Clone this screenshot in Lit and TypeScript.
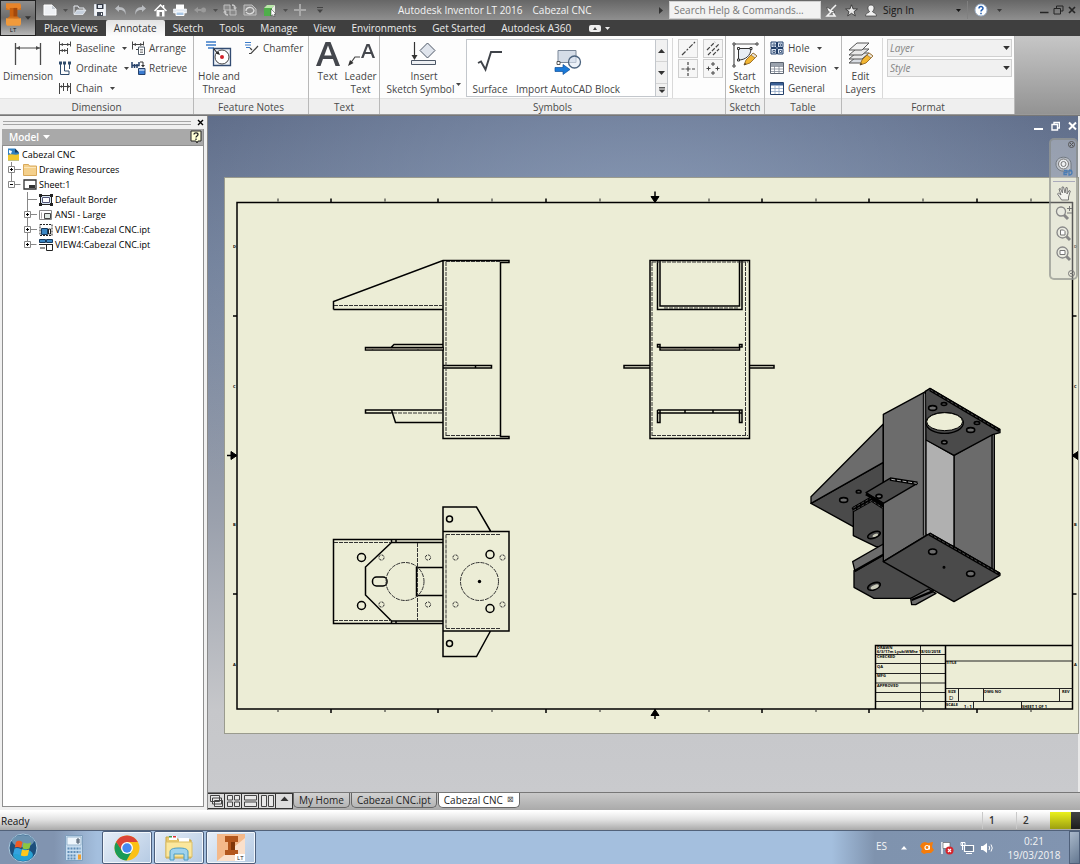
import { LitElement, html, svg, css, nothing } from "lit";
import { customElement, property } from "lit/decorators.js";

const ic = (w: number, h: number, body: unknown) =>
  html`<svg width=${w} height=${h} viewBox="0 0 ${w} ${h}" fill="none" aria-hidden="true">${body}</svg>`;

const caret = html`<svg class="caret" width="5" height="3" viewBox="0 0 5 3" aria-hidden="true"><path d="M0 0h5L2.5 3z" fill="currentColor" /></svg>`;

const pencil = svg`<g transform="translate(13 12)"><path d="M0 12 2 7 9 0l4 3-7 7z" fill="#f2b632" stroke="#8a5a12" stroke-width=".8"/><path d="M9 0l4 3-2 2-4-3z" fill="#e8e4da" stroke="#8a5a12" stroke-width=".6"/><path d="M0 12l1-2 1.400 1.200z" fill="#333"/></g>`;

const icons = {
  newDoc: ic(14, 12, svg`<path d="M1 1h8l4 4v6H1z" fill="#eef0f3" stroke="#fff"/><path d="M9 1v4h4" fill="#c4c9d0"/>`),
  open: ic(14, 12, svg`<path d="M1 10V2h4l1 2h5v2" stroke="#e6eaf0"/><path d="M1 10.500 4 6h9l-3 4.500z" fill="#c5cfdc" stroke="#f4f6fa" stroke-width=".7"/>`),
  save: ic(12, 12, svg`<path d="M.5.5h11v11H.5z" fill="#f2f4f7" stroke="#dfe5ee"/><path d="M2.500 0h7v5h-7z" fill="#333a46"/><path d="M4 1h4v3H4z" fill="#dfe5ee"/><path d="M3 8h6v4H3z" fill="#454c58"/><path d="M7 9h1v2H7z" fill="#fff"/>`),
  undo: ic(13, 12, svg`<path d="M5 1 1 4.500 5 8V6c3.500-.3 6 1 6.500 5C12.500 6 10 3 5 3z" fill="#b9bcc0"/>`),
  redo: ic(13, 12, svg`<path d="M8 1l4 3.500L8 8V6C4.500 5.700 2 7 1.500 11 .5 6 3 3 8 3z" fill="#b9bcc0"/>`),
  home: ic(13, 13, svg`<path d="M2.500 6v6.500h8V6" fill="#fff"/><path d="M.5 7 6.500 1l6 6" stroke="#fff" stroke-width="1.500"/><path d="M9.500 1v3" stroke="#fff" stroke-width="1.500"/><path d="M5.500 8h2.500v4.500H5.500z" fill="#777"/>`),
  print: ic(14, 12, svg`<path d="M3 .5h8V5H3z" fill="#fff"/><path d="M.5 5h13v4H.5z" fill="#e4eaf2" stroke="#fff" stroke-width=".6"/><path d="M3 8h8v3.500H3z" fill="#a9c6e4" stroke="#fff"/>`),
  back: ic(14, 10, svg`<path d="M5 2 1 5l4 3V6h3V4H5z" fill="#9a9a9a"/><circle cx="10.500" cy="5" r="2.500" fill="#9a9a9a"/>`),
  refresh: ic(14, 12, svg`<path d="M1 1h6v5H1zM7 6h6v5H7z" fill="#8a8a8a" stroke="#c0c0c0"/><path d="M9 1c3 0 3 2 3 3M5 11C2 11 2 9 2 8" stroke="#c8c8c8" stroke-width="1.500"/><path d="M10 3.500h4L12 6zM0 8.500h4L2 6z" fill="#c8c8c8"/>`),
  refreshAll: ic(14, 12, svg`<path d="M1 1h8l4 4v6H1z" fill="#8a8a8a" stroke="#c0c0c0"/><path d="M3 7c0-4 6-5 8-1M11 6c0 4-6 5-8 2" stroke="#dcdcdc" stroke-width="1.300"/>`),
  cube: ic(14, 13, svg`<path d="M1 4 4 1h8l-3 3z" fill="#b9e6a8"/><path d="M1 4h8v8H1z" fill="#4fae4a"/><path d="M9 4l3-3v8l-3 3z" fill="#e9efe6"/><path d="M8 5l5 5-2 .3 1 2-1.300.5-1-2L8 12z" fill="#fff" stroke="#333" stroke-width=".5"/>`),
  plus: ic(12, 12, svg`<path d="M6 0v12M0 6h12" stroke="#a8a8a8" stroke-width="2"/>`),
  more: ic(8, 6, svg`<path d="M1 .5h6" stroke="#444"/><path d="M1 2.500h6L4 6z" fill="#444"/>`),
  dish: ic(13, 13, svg`<path d="M2 3c0 5 4 7 8 5z" fill="#f5f5f5" stroke="#333" stroke-width=".6"/><path d="M6 6l5-5M6 8l-4 4h8L8 9" stroke="#f5f5f5" stroke-width="1.500"/>`),
  star: ic(13, 13, svg`<path d="M6.500.8 8.100 5h4.300L9 7.600l1.300 4.300-3.800-2.600-3.800 2.600L4 7.600.6 5h4.300z" fill="#e9e9e9" stroke="#2c2c2c" stroke-width=".8"/>`),
  user: ic(12, 13, svg`<path d="M6 1c4 0 3.500 5 1.500 6.500 0 1.500 4 1 4 4.500H.5c0-3.500 4-3 4-4.500C2.500 6 2 1 6 1z" fill="#f1f1f1" stroke="#3a3a3a" stroke-width=".7"/>`),
  help: ic(14, 14, svg`<circle cx="7" cy="7" r="6" fill="#fff" stroke="#9fb3cc"/><path d="M5 5.500C5 3 9 3 9 5.300 9 7 7 6.800 7 8.500M7 9.800v1.400" stroke="#1e5bb0" stroke-width="1.500"/>`),
  min: ic(10, 10, svg`<path d="M1 7.500h8.500" stroke="#252525" stroke-width="1.500"/>`),
  restore: ic(11, 10, svg`<path d="M3.500 3V1h6.500v5H8" stroke="#252525"/><path d="M1 3.500h6.500V9H1z" stroke="#252525"/>`),
  close: ic(8, 10, svg`<path d="M1 2l6 6M7 2 1 8" stroke="#252525" stroke-width="1.700"/>`),

  dimension: ic(28, 28, svg`<path d="M1.500 3v22M26.500 3v22" stroke="#4b4b4b" stroke-width="1.300"/><path d="M2 8h24" stroke="#4b4b4b"/><path d="M2 8l4-2v4zM26 8l-4-2v4z" fill="#4b4b4b"/>`),
  baseline: ic(14, 14, svg`<path d="M1.500.5v13M12.500.5v5M9.500 7v6" stroke="#444"/><path d="M2 3.500h10M2 9.500h7" stroke="#444"/><path d="M2 3.500 5 2v3zM12 3.500 9 2v3zM2 9.500 5 8v3zM9 9.500 6 8v3z" fill="#444"/>`),
  ordinate: ic(14, 14, svg`<path d="M2.500 3v10.500H11V10H6.500V3M11.500 3v5" stroke="#2e4a6b"/><path d="M1 .5h3v3H1zM5 .5h3v3H5zM10 .5h3v3h-3z" fill="#2e4a6b"/>`),
  chain: ic(14, 13, svg`<path d="M1.500 1v11M5.500 1v8M9.500 1v8M12.500 1v11M2 4.500h10" stroke="#444"/><path d="M2 4.500 4 3v3zM12 4.500 10 3v3z" fill="#444"/>`),
  arrange: ic(15, 14, svg`<path d="M1.500.5v8M12.500.5v4M2 3.500h10M5 8.500h2" stroke="#444"/><path d="M2 3.500 5 2v3zM12 3.500 9 2v3z" fill="#444"/><path d="M7.500 6h6v7.500h-6z" fill="#fff" stroke="#4f5a66"/><path d="M9 8.500h3M9 10h3M9 11.500h3" stroke="#777" stroke-width=".8"/>`),
  retrieve: ic(15, 14, svg`<path d="M1 1v6M3.500 3v4M6 3v4M1 4.500h7V1" stroke="#24406a" stroke-width="1.500"/><path d="M9 1h3v4" stroke="#333"/><path d="M10 4h4l-2 2.500z" fill="#333"/><path d="M7.500 7.500h6.500v6H7.500z" fill="#3b7bd0" stroke="#24406a"/><path d="M8 9h5.500" stroke="#fff"/>`),
  hole: ic(28, 28, svg`<path d="M1 2h10M1 5h10M3 8h6" stroke="#3b7bc8" stroke-width="1.500"/><path d="M8.500 8.500h17v17h-17z" fill="#eef2f8" stroke="#334c72" stroke-width="1.300"/><circle cx="17" cy="17" r="7" fill="#fff" stroke="#444"/><circle cx="17" cy="17" r="2" fill="#d3222a"/><path d="M9 9l4 5" stroke="#222" stroke-width="1.200"/><path d="M15 15l-4-1.500 2.500-2z" fill="#222"/>`),
  chamfer: ic(14, 14, svg`<path d="M0 1.500h6M0 4h6M1 6.500h4" stroke="#3b7bc8"/><path d="M4 12.500h2L13 5M7 9 5 7" stroke="#444" stroke-width="1.200"/>`),
  bigA: ic(26, 28, svg`<path d="M1 26 10.500 2h5L25 26h-4.500l-2.500-7H8l-2.500 7zM9.300 15.500h7.400L13 5.500z" fill="#44474d" fill-rule="evenodd"/>`),
  leader: ic(28, 26, svg`<path d="M14 17 19.500 3h3L28 17h-2.500L24 13h-6l-1.500 4zM18.700 11h4.600L21 5z" fill="#44474d" fill-rule="evenodd"/><path d="M3 23l5-7h5" stroke="#444" stroke-width="1.200"/><path d="M1 25l2-6 3.500 3z" fill="#333"/>`),
  insert: ic(28, 26, svg`<path d="M4.500 1v16" stroke="#333" stroke-width="1.200"/><path d="M1.500 14h6l-3 5z" fill="#333"/><path d="M17.500 2 25 9.500 17.500 17 10 9.500z" fill="#dfe4ec" stroke="#4d5766"/><path d="M1.500 19.500h24v4h-24z" fill="#eef0f3" stroke="#4d5766"/>`),
  surface: ic(28, 24, svg`<path d="M2 13l3-1.500 4.500 8L15 2h11" stroke="#3f4349" stroke-width="1.900"/>`),
  block: ic(28, 26, svg`<path d="M4 1.500h18v12H4z" fill="#d5dde8" stroke="#7a8798"/><circle cx="20.500" cy="13" r="6" stroke="#4c647f" fill="#dfe8f3" fill-opacity=".6" stroke-width="1.300"/><path d="M3 12.500h3v3H3z" fill="#fff" stroke="#333" stroke-width=".8"/><path d="M1 18.500h8v-3l7 5-7 5v-3H1z" fill="#1b7ad8" stroke="#0e4f9a" stroke-width=".7"/>`),
  cl1: ic(16, 15, svg`<path d="M2 14 15 1" stroke="#444" stroke-width="1.200" stroke-dasharray="5 1.500 2 1.500"/>`),
  cl2: ic(16, 15, svg`<path d="M2 9l8-8M3 14 14 3M8 14l6-6" stroke="#444" stroke-width="1.200" stroke-dasharray="4 1.500"/>`),
  cl3: ic(16, 15, svg`<path d="M8 1v3M8 5.500v5M8 12v3M1.500 8h3M5.500 8h5M12 8h3" stroke="#444" stroke-width="1.200"/>`),
  cl4: ic(16, 15, svg`<path d="M8 1v4M6 3h4M8 10v4M6 12h4M3.500 5.500v4M1.500 7.500h4M12.500 5.500v4M10.500 7.500h4" stroke="#444"/>`),
  sketch: ic(28, 27, svg`<path d="M3 3h23M3 3v22" stroke="#555" stroke-width="1.200"/><path d="M2 2h2v2H2zM25 2h2v2h-2zM2 24h2v2H2z" fill="#fff" stroke="#444"/><path d="M7.500 7.500H20C20 15 14 19 7.500 19z" fill="#e8edf3" stroke="#333"/><path d="M6.500 6.500h2v2h-2zM19 6.500h2v2h-2zM6.500 18h2v2h-2z" fill="#fff" stroke="#333"/>${pencil}`),
  holeTable: ic(14, 14, svg`<path d="M1 1h5.500v5.500H1zM7.500 1H13v5.500H7.500zM1 7.500h5.500V13H1zM7.500 7.500H13V13H7.500z" fill="#dbe6f4" stroke="#24406a"/><path d="M3 3h2v2H3zM9.500 3h2v2h-2zM3 9.500h2v2H3zM9.500 9.500h2v2h-2z" fill="#fff" stroke="#24406a" stroke-width=".8"/>`),
  revTable: ic(14, 12, svg`<path d="M.5.5h13v11H.5z" fill="#fff" stroke="#5c6470"/><path d="M1 1h12v3H1z" fill="#9aa2ad"/><path d="M1 4.500h12M1 7h12M1 9.500h12M4.500 4v7M9 4v7" stroke="#808894" stroke-width=".8"/>`),
  genTable: ic(14, 13, svg`<path d="M.5.5h13v12H.5z" fill="#fff" stroke="#24406a"/><path d="M1 1h12v2.500H1z" fill="#3a5f95"/><path d="M1 6.500h12M1 9.500h12M5 4v8M9 4v8" stroke="#8fa6c4" stroke-width=".8"/>`),
  layers: ic(28, 27, svg`<path d="M2 22l7-6h13l-7 6z" fill="#d9dde3" stroke="#555"/><path d="M2 18l7-6h13l-7 6z" fill="#e8e8e8" stroke="#555"/><path d="M2 14 9 8h13l-7 6z" fill="#e8e8e8" stroke="#555"/><path d="M2 9 10 2h12l-7 7z" fill="#f2f2f2" stroke="#555"/>${pencil}`),

  wcascade: ic(13, 12, svg`<path d="M.5.5h9v6h-9zM2.500 3h9v6h-9zM4.500 5.500h8v6h-8z" fill="#e8e8e8" stroke="#444"/>`),
  wgrid: ic(13, 12, svg`<path d="M.5.5h5v4.500h-5zM7.500.5h5v4.500h-5zM.5 7h5v4.500h-5zM7.500 7h5v4.500h-5z" fill="#e8e8e8" stroke="#444"/>`),
  whoriz: ic(13, 12, svg`<path d="M.5.5h12v4.500H.5zM.5 7h12v4.500H.5z" fill="#e8e8e8" stroke="#444"/>`),
  wvert: ic(13, 12, svg`<path d="M.5.5h5v11h-5zM7.500.5h5v11h-5z" fill="#e8e8e8" stroke="#444"/>`),
  wup: ic(13, 12, svg`<path d="M2.500 6h8l-4-4.500z" fill="#333"/>`),
};

const inventorMark = (w: number, h: number) => html`<svg width=${w} height=${h} viewBox="0 0 16 24" aria-hidden="true">
  <path d="M0 0h15l1 2v5H0z" fill="#e8842a" /><path d="M4 5h8v13H4z" fill="#c8600f" /><path d="M8 5h4v13H8z" fill="#a3480c" />
  <path d="M0 16h16v6l-1 2H1l-1-2z" fill="#f09a3c" /><path d="M0 5l4 2h8l4-2v2H0z" fill="#d0701c" /><path d="M1 16l3-2h8l3 2z" fill="#d0701c" />
</svg>`;

/* One line of the model tree: indent level, expander sign, icon and name. */
interface Node { level: number; sign: string; icon: unknown; name: string }
const tree: Node[] = [
  { level: 0, sign: "", name: "Cabezal CNC", icon: ic(13, 13, svg`<path d="M1 .5h7l4 4v8H1z" fill="#2f7fc0"/><path d="M1 7c4-2 7 1 11-1v6.500H1z" fill="#f0c62e"/><path d="M2 2l3 1-1 3-2-1z" fill="#fff"/><path d="M8 .5v4h4z" fill="#183a5c"/>`) },
  { level: 1, sign: "+", name: "Drawing Resources", icon: ic(14, 12, svg`<path d="M.5.5h5l1 1.500h7v9.500H.5z" fill="#f4d08c" stroke="#d9a95a"/><path d="M1 3.500h12" stroke="#fbe6bb"/>`) },
  { level: 1, sign: "-", name: "Sheet:1", icon: ic(14, 11, svg`<path d="M1 1h12v9H1z" fill="#fff" stroke="#333" stroke-width="1.300"/><path d="M6 6h6v3H6z" fill="#333"/>`) },
  { level: 2, sign: "", name: "Default Border", icon: ic(14, 12, svg`<path d="M1.500 1.500h11v9h-11z" fill="#dbe9f6" stroke="#222"/><path d="M3.500 3.500h7v5h-7z" fill="#fff" stroke="#557"/><path d="M0 0h3v3H0zM11 0h3v3h-3zM0 9h3v3H0zM11 9h3v3h-3z" fill="#222"/>`) },
  { level: 2, sign: "+", name: "ANSI - Large", icon: ic(14, 12, svg`<path d="M.5 1.500h12v9H.5z" fill="#fff" stroke="#888"/><path d="M2.500 3.500v6" stroke="#aaa"/><path d="M5.500 4.500h6v5h-6z" fill="#dfe9e4" stroke="#444"/>`) },
  { level: 2, sign: "+", name: "VIEW1:Cabezal CNC.ipt", icon: ic(14, 12, svg`<path d="M1 .5h12v11H1z" stroke="#222" stroke-dasharray="2 1"/><path d="M2.500 4.500h6v6h-6z" fill="#3c87c4" stroke="#16395c"/><path d="M9.500 5h2v5h-2z" stroke="#222"/>`) },
  { level: 2, sign: "+", name: "VIEW4:Cabezal CNC.ipt", icon: ic(14, 12, svg`<path d="M0 0h14v12H0z" fill="#fff"/><path d="M.5.500h6v3h-6zM7.500.5h6v3h-6z" fill="#3c87c4" stroke="#16395c"/><path d="M0 5.500h14M7.500 6v5.500h6V6M1 9h5" stroke="#222"/>`) },
];

/* Zone boundaries are heavy ticks; zone names sit half way between them. */
const ticksX = [331, 438, 546, 762, 869, 977];
const ticksY = [316, 594];
const midX = [278, 385, 492, 600, 709, 816, 923, 1031];

const holes = (pts: number[][], r: number) => pts.map(([x, y]) => svg`<circle cx=${x} cy=${y} r=${r} />`);

const sideView = svg`
  <g class="thick">
    <path d="M333.500 309.500V301.500L443 260.500H509V262.500H500.500V436.500H509V438.500H443V260M333.500 309.500H443" />
    <path d="M365.500 347.500H443V350H365.500zM391 347.500L394 344.500H443M372.500 347v3M391.500 347v3M418 347v3" />
    <path d="M443 365.500H491.500V368H443M475.500 365v3" />
    <path d="M443 410H365.500V413H391.500M391.500 410L395.500 422.500H443" />
  </g>
  <path class="dash" d="M334 305.500H443M446 262V436M446 261.500H500M446 435.500H500M393 413H443" />
  <path class="fill" d="M366 348h77v1.500h-77z" />`;

const frontView = svg`
  <g class="thick">
    <path d="M650 260.500H749.500V438.500H650z" />
    <path d="M657.500 260V309.500H742V260M660 260V306H739.500V260" />
    <path d="M660 347.500H739.500V350H660zM657.500 344.500H660V347H657.500zM739.500 344.500H742V347H739.500zM685 347v3M713 347v3" />
    <path d="M650 365.500H624V368H650M749.500 365.500H774V368H749.500" />
    <path d="M657.500 410H742V422.500H739.500V410M657.500 410V422.500H660V410M658 413H742M685 410v3M713 410v3" />
  </g>
  <path class="dash" d="M652 262H748M652 262V436M745.500 262V436M652 435.500H748M664 308H738" />
  <path class="fill" d="M661 348h78v1.500h-78z" />`;

const topView = svg`
  <g class="thick">
    <path d="M443 539.500H333.500V623.500H443M443 542.500H391.500L365.500 567V595L391.500 621H443M391.500 540v3M396 540v3M391.500 621v3M396 621v3" />
    <path d="M443 567.500H416.500V595.500H443" />
    <path d="M443 531.500H509V631H443zM443 531.500V507H476.500L490.500 531M443 631V656.500H476.500L490.500 631" />
    <rect x="372.500" y="577" width="14.500" height="9" rx="4" />
    ${holes([[361.5, 557.5], [361.5, 605.5], [490, 554.5], [490, 608.5]], 4)}
    ${holes([[449.5, 519], [449.5, 643.5]], 3)}
  </g>
  <path class="dash" d="M334 542.500H391M334 620.500H391M417.500 543V621M446 534.500H501M446 628.500H501M446 534.500V628" />
  <g class="dash small">
    ${holes([[381.5, 557.5], [428, 557.5], [455.5, 557.5], [502.5, 557.5], [381.5, 604.5], [428, 604.5], [455.5, 604.5], [502.5, 604.5]], 2.6)}
  </g>
  <g class="dash big">${holes([[405, 581.5], [479.5, 581.5]], 19)}</g>
  <circle cx="479.500" cy="581.500" r="1.700" fill="#000" />`;

const isoView = svg`
  <g transform="translate(800 380) scale(.3333)" stroke="#000" stroke-width="4" stroke-linejoin="round">
    <path d="M33 370 250 247V500L222 478 160 440z" fill="#4a4a4a" />
    <path d="M33 350 250 132V247L33 370z" fill="#6c6c6c" />
    <path d="M160 382 212 352 250 380V500H228L160 467z" fill="#4a4a4a" />
    <path d="M158 390 215 358 250 380" stroke-width="14" fill="none" /><path d="M160 384 215 353 250 374M160 392 215 362 250 384" stroke="#6c6c6c" stroke-width="2" fill="none" stroke-dasharray="9 5" />
    <path d="M162 572 250 522 408 630 333 655H222L162 622z" fill="#4a4a4a" />
    <path d="M158 545 250 492V525L165 574z" fill="#6c6c6c" />
    <path d="M332 655 385 627 408 640 347 674H335z" fill="#6c6c6c" />
    <path d="M165 572 250 524M335 660 398 634" stroke-width="7" />
    <path d="M250 103 378 34V467L250 545z" fill="#6c6c6c" />
    <path d="M575 160H583V575H575z" fill="#8a8a8a" />
    <path d="M462 226 576 162V568L462 500z" fill="#6b6b6b" />
    <path d="M378 178 462 226V500L378 462z" fill="#b0b0b0" />
    <path d="M376 34 390 25 600 148V158L578 164 462 226 378 180z" fill="#4a4a4a" />
    <path d="M390 29 598 152" stroke-width="10" /><path d="M392 30 596 150" stroke="#6c6c6c" stroke-width="2" stroke-dasharray="9 5" />
    <path d="M370 40V467" stroke-width="3" /><path d="M374 42V465" stroke="#8a8a8a" stroke-width="3" />
    <ellipse cx="434" cy="129" rx="56" ry="31" fill="#4a4a4a" />
    <ellipse cx="434" cy="125" rx="54" ry="27" fill="#ecedd6" stroke-width="3" />
    <path d="M250 545 390 460 600 580V586L462 665z" fill="#4a4a4a" />
    <path d="M388 462 598 582" stroke-width="10" /><path d="M390 463 596 581" stroke="#6c6c6c" stroke-width="2" stroke-dasharray="9 5" />
    <path d="M198 338 270 295 352 310 250 370z" fill="#4a4a4a" />
    <path d="M270 297 352 310" stroke-width="11" /><path d="M274 298 350 310" stroke="#b0b0b0" stroke-width="3" stroke-dasharray="12 5" />
    <path d="M198 342 250 372" stroke-width="9" />
    <g fill="#6c6c6c" stroke-width="5">
      <ellipse cx="398" cy="84" rx="12" ry="7" /><ellipse cx="432" cy="72" rx="8" ry="4" /><ellipse cx="531" cy="129" rx="8" ry="4" />
      <ellipse cx="512" cy="150" rx="12" ry="7" /><ellipse cx="433" cy="187" rx="8" ry="5" />
      <ellipse cx="131" cy="360" rx="12" ry="7" /><ellipse cx="176" cy="335" rx="7" ry="4" /><ellipse cx="237" cy="349" rx="9" ry="6" />
      <ellipse cx="398" cy="515" rx="12" ry="8" /><ellipse cx="512" cy="581" rx="12" ry="8" /><circle cx="432" cy="562" r="2" />
    </g>
    <g stroke-width="5" fill="#4a4a4a">
      <ellipse cx="222" cy="465" rx="20" ry="9" transform="rotate(-22 222 465)" /><ellipse cx="222" cy="619" rx="20" ry="10" transform="rotate(-22 222 619)" />
    </g>
    <g stroke="none" fill="#c9cab9">
      <ellipse cx="226" cy="466" rx="9" ry="4" transform="rotate(-22 226 466)" /><ellipse cx="224" cy="621" rx="13" ry="6" transform="rotate(-22 224 621)" />
    </g>
  </g>`;

const titleBlock = svg`
  <path class="thin" d="M876 654.500H945.500M876 663.500H945.500M876 673.500H945.500M876 683H945.500M876 692.500H945.500M876 701.500H1072.500M920.500 646V709M945.500 661H1072.500M945.500 688.500H1072.500M958.500 689V701M983.500 689V701M1059.500 689V701M973.500 702V709M1021.500 702V709" />
  <path class="thick" d="M875.500 709V645.500H1072.500M945.500 645.500V709" />
  <g class="tiny">
    <text x="877" y="649">DRAWN</text><text x="877" y="653">6/3/17m LyubiWMhe 18/03/2018</text>
    <text x="877" y="658">CHECKED</text><text x="877" y="668">QA</text><text x="877" y="677">MFG</text><text x="877" y="687">APPROVED</text>
    <text x="946" y="664">TITLE</text><text x="948" y="693">SIZE</text><text class="size" x="949" y="700">D</text>
    <text x="984" y="693">DWG NO</text><text x="1062" y="693">REV</text><text x="946" y="706">SCALE</text>
    <text x="964" y="708">1 : 1</text><text x="1022" y="708">SHEET 1  OF 1</text>
  </g>`;

@customElement("ribbon-panel")
export class RibbonPanel extends LitElement {
  @property() label = "";
  static styles = css`
    :host { display: flex; flex-direction: column; background: #fdfdfd; border-right: 1px solid #b9b9b9; box-sizing: border-box; flex: none; }
    .body { flex: 1; display: flex; padding: 2px 2px 0; }
    .label { height: 15px; line-height: 16px; text-align: center; background: #efefef; border-top: 1px solid #e2e2e2; color: #4a4a4a; }
  `;
  render() {
    return html`<div class="body"><slot></slot></div><div class="label">${this.label}</div>`;
  }
}

@customElement("app-root")
export class AppRoot extends LitElement {
  static styles = css`
    :host { display: flex; flex-direction: column; min-height: 100vh; font-family: "Open Sans", "Noto Sans", sans-serif; font-size: 10px; color: #444; background: #f0f0f0; overflow: hidden; }
    * { box-sizing: border-box; }
    button, input, select { font: inherit; color: inherit; margin: 0; padding: 0; border: 0; background: none; white-space: nowrap; }
    svg { display: block; flex: none; }

    .head { display: grid; grid-template-columns: 36px minmax(0, 1fr); grid-template-rows: 20px 16px; background: #3f3f3f; flex: none; }
    .app { grid-row: span 2; display: flex; align-items: center; justify-content: center; gap: 1px; border: 1px solid #222; background: linear-gradient(#8d8d8d, #6b6b6b 50%, #b8b8b8); font-size: 6px; color: #111; }
    .app svg.caret { width: 6px; height: 4px; margin-left: 3px; color: #333; }
    .logo { display: flex; flex-direction: column; align-items: center; line-height: 8px; }
    .title { display: flex; align-items: center; background: linear-gradient(#666, #8f8f8f); color: #f4f4f4; }
    .quick { display: flex; align-items: center; width: 362px; flex: none; padding-left: 4px; color: #505050; }
    .quick button, .info button { display: flex; align-items: center; justify-content: center; width: 20px; height: 18px; }
    .quick .drop, .info .drop { width: 10px; }
    .drop .caret { margin: 0; }
    .name { flex: 1; min-width: 0; display: flex; gap: 10px; white-space: nowrap; }
    .info { display: flex; align-items: center; color: #3a3a3a; }
    .search { width: 152px; height: 18px; background: #f2f2f2; padding: 0 4px; border: 1px solid #cfcfcf; margin: 0 0 0 5px; }
    .search::placeholder { color: #777; opacity: 1; }
    .info .sign { width: 86px; justify-content: space-between; color: #151515; padding: 0 6px 0 2px; }
    .info .helpbtn { border-left: 1px solid #808080; width: 27px; }
    .win { display: flex; align-items: center; gap: 4px; padding: 0 4px 0 35px; }
    .info .win button { width: auto; }
    .tabs { display: flex; align-items: stretch; color: #ececec; }
    .tabs button { padding: 0 8px; line-height: 15px; }
    .tabs .on { background: linear-gradient(#e2e2e2, #fdfdfd); color: #333; border-radius: 2px 2px 0 0; }
    .tabs .pill { display: flex; align-items: center; gap: 1px; padding: 0 10px; }

    .ribbon { display: flex; height: 79px; background: linear-gradient(#c6c6c6, #939393); flex: none; border-bottom: 1px solid #999; }
    .dim { width: 194px; } .feat { width: 115px; } .txt { width: 71px; } .sym { width: 346px; } .sk { width: 39px; } .tab { width: 77px; } .fmt { width: 173px; }
    .big { display: flex; flex-direction: column; align-items: center; line-height: 13px; min-width: 33px; height: 60px; flex: none; }
    .big .pic { height: 32px; display: flex; align-items: center; }
    .last { display: flex; align-items: flex-start; }
    .last .caret { margin: 0 0 0 2px; }
    .col { display: flex; flex-direction: column; flex: none; }
    .col button { display: flex; align-items: center; gap: 4px; height: 20px; }
    .caret { margin-left: 3px; }
    .c1 { width: 75px; padding-left: 4px; } .c2 { padding-left: 2px; } .c2 button { gap: 3px; } .c3 { padding-left: 3px; width: 60px; }
    .w52 { width: 52px; } .w46 { width: 46px; } .w84 { width: 84px; }
    .gallery { display: flex; width: 203px; height: 58px; border: 1px solid #c3c7cc; margin-top: 1px; background: #fff; }
    .gallery .big { height: 56px; padding-top: 5px; }
    .gallery .big .pic { height: 38px; padding-bottom: 4px; }
    .gallery .wide { width: 110px; }
    .roll { display: flex; flex-direction: column; width: 12px; border-left: 1px solid #c3c7cc; color: #444; margin-left: auto; }
    .roll button { flex: 1; display: flex; align-items: center; justify-content: center; border-bottom: 1px solid #d4d4d4; background: #f1f1f1; }
    .roll button:last-child { flex: none; height: 12px; border-bottom: 0; }
    .minis { display: grid; grid-template: 19px 19px / 20px 20px; gap: 1px 5px; margin-left: 4px; padding: 1px 0 0 5px; border-left: 1px solid #d9d9d9; align-content: start; }
    .minis button { border: 1px solid #cfcfcf; background: #f6f6f6; display: flex; align-items: center; justify-content: center; }
    .picks { display: flex; flex-direction: column; gap: 2px; flex: 1; margin-left: 5px; padding: 1px 0 0 4px; border-left: 1px solid #d9d9d9; height: 60px; }
    .pick { display: grid; align-items: center; }
    .pick select { grid-area: 1 / 1; appearance: none; height: 18px; width: 100%; background: #f1f1f1; border: 1px solid #d0d0d0; padding: 0 2px; font-style: italic; color: #858585; }
    .pick svg { grid-area: 1 / 1; justify-self: end; margin-right: 2px; pointer-events: none; color: #333; width: 7px; height: 4px; }

    .main { flex: 1; display: flex; min-height: 0; border-top: 1px solid #777; }
    .side { width: 208px; flex: none; display: flex; flex-direction: column; padding: 0 3px 3px 2px; border-right: 1px solid #8a8a8a; }
    .grip { display: flex; align-items: center; gap: 6px; height: 13px; padding-left: 1px; }
    .grip i { flex: 1; height: 4px; border: 1px solid #a5a5a5; border-width: 1px 0; }
    .panelhead { display: flex; align-items: center; justify-content: space-between; height: 17px; padding: 0 1px 0 7px; background: #a9a9a9; color: #fff; font-weight: 600; border: 1px solid #8f8f8f; border-width: 0 1px 1px 0; }
    .panelhead button { display: flex; align-items: center; }
    .tree { flex: 1; margin: 0; padding: 1px 0 0 4px; list-style: none; background: #fff; border: 1px solid #8f8f8f; border-top: 0; color: #000; font-size: 9px; }
    .tree li { display: flex; align-items: center; gap: 2px; height: 15px; white-space: nowrap; }
    .exp { width: 14px; height: 15px; }
    .l2 { margin-left: 16px; }

    .work { flex: 1; min-width: 0; display: flex; flex-direction: column; }
    .canvas { flex: 1; position: relative; padding: 62px 0 0 17px; border-right: 2px solid #e9e9e9; background: radial-gradient(ellipse 70% 50% at 50% 18%, rgba(150, 168, 196, .75), transparent), linear-gradient(#56637f, #6d7b94 22%, #9ba1ad 60%, #c6c7ca 88%, #c9cacd); }
    .sheet { width: 100%; height: auto; background: #ecedd6; box-shadow: 0 0 0 1px #9a9b8e; }
    .thick { stroke: #000; stroke-width: 1.5; fill: none; }
    .thin { stroke: #222; stroke-width: 1; fill: none; }
    .dash { stroke: #333; stroke-width: 1; fill: none; stroke-dasharray: 4 1; }
    .dash.small { stroke-dasharray: 3 1; }
    .fill { fill: #777267; }
    .tiny { font-size: 4px; font-weight: 700; fill: #000; }
    .tiny .size { font-size: 6px; font-weight: 400; }
    .mdi { position: absolute; top: 5px; right: 1px; display: flex; gap: 8px; }
    .nav { position: absolute; top: 22px; right: 0; width: 29px; height: 142px; border: 2px solid rgba(130, 134, 130, .6); border-radius: 5px; background: rgba(225, 226, 222, .4); display: flex; flex-direction: column; align-items: center; padding: 15px 0 0; gap: 3px; }
    .nav button { display: flex; }
    .nav hr { width: 22px; margin: 0; border: 0; border-top: 1px solid #aab; }
    .nav .x { position: absolute; right: 1px; top: 1px; } .nav .o { position: absolute; right: 1px; bottom: 1px; }

    .docs { display: flex; height: 18px; background: linear-gradient(#c9c9c9, #aaa); border-top: 1px solid #777; color: #222; flex: none; }
    .docs .wbtn { width: 17px; height: 16px; border: 1px solid #333; border-left-width: 0; display: flex; align-items: center; justify-content: center; background: #dcdcdc; }
    .docs .wbtn + .doc { margin-left: 0; }
    .docs .doc { height: 15px; line-height: 14px; padding: 0 5px; border: 1px solid #666; border-top: 0; border-radius: 0 0 5px 5px; background: linear-gradient(#d2d2d2, #b5b5b5); margin-left: 1px; }
    .docs .doc.on { background: #fff; display: flex; gap: 4px; }
    .docs sup { font-size: 8px; line-height: 11px; color: #555; }

    .status { display: flex; align-items: center; height: 20px; flex: none; background: linear-gradient(#fff, #e2e2e2 45%, #aaa); color: #111; padding-left: 1px; border-top: 1px solid #fff; }
    .status .msg { flex: 1; line-height: 18px; }
    .status .n { width: 34px; height: 17px; line-height: 17px; padding-left: 6px; border-left: 1px solid #c9c9c9; font-weight: 600; color: #333; }
    .status .lamp { width: 21px; height: 17px; background: linear-gradient(#eaf01c, #9c9f10); }
    .status .dark { width: 9px; height: 17px; background: linear-gradient(#444, #1c1c1c); }

    .task { display: flex; height: 34px; flex: none; border-top: 1px solid #52627a; background: linear-gradient(90deg, #8194b0, #8194b0 5%, #a4bfde 9%, #a4bfde 77%, #7f93ae 81%, #8194b0); color: #f5f5f5; }
    .task button { display: flex; align-items: center; justify-content: center; }
    .start { width: 46px; } .pin { width: 56px; }
    .run { width: 50px; margin-right: 2px; border: 1px solid #4c5f7c; border-radius: 2px; background: linear-gradient(135deg, #e6eef7, #b5cae3); box-shadow: inset 0 0 0 1px #f1f6fb; }
    .tray { margin-left: auto; display: flex; align-items: center; gap: 5px; }
    .lang { margin: 0 8px 4px 0; }
    .clock { width: 70px; text-align: center; line-height: 14px; }
    .peek { align-self: stretch; width: 11px; margin-left: -5px; border: 1px solid #4f607a; background: linear-gradient(135deg, #a9b8ca, #647891); }
  `;

  private row(icon: unknown, text: string, drop = false) {
    return html`<button>${icon}<span>${text}</span>${drop ? caret : nothing}</button>`;
  }

  private big(icon: unknown, lines: string[], cls = "") {
    return html`<button class="big ${cls}"><span class="pic">${icon}</span>${lines.map((l) => html`<span>${l}</span>`)}</button>`;
  }

  private header() {
    const i = icons;
    const drop = html`<button class="drop" aria-label="More">${caret}</button>`;
    const b = (icon: unknown, name: string) => html`<button aria-label=${name}>${icon}</button>`;
    return html`<header class="head">
      <button class="app" aria-label="Application menu"><span class="logo">${inventorMark(15, 23)}LT</span>${caret}</button>
      <div class="title">
        <div class="quick">
          ${b(i.newDoc, "New")}${drop}${b(i.open, "Open")}${b(i.save, "Save")}${b(i.undo, "Undo")}${b(i.redo, "Redo")}
          ${b(i.home, "Home")}${b(i.print, "Print")}${b(i.back, "Return")}${drop}${b(i.refresh, "Update")}${b(i.refreshAll, "Update all")}
          ${b(i.cube, "Select")}${drop}${b(i.plus, "Add")}${b(i.more, "Customize")}
        </div>
        <div class="name"><span>Autodesk Inventor LT 2016</span><span>Cabezal CNC</span></div>
        <div class="info">
          ${ic(5, 7, svg`<path d="M0 0l4 3.500L0 7z" fill="#333"/>`)}
          <input class="search" type="search" aria-label="Search help" placeholder="Search Help &amp; Commands..." />
          ${b(i.dish, "Communication")}${b(i.star, "Favorites")}${b(i.user, "Account")}
          <button class="sign"><span>Sign In</span>${caret}</button>
          <button class="helpbtn" aria-label="Help">${i.help}</button>${drop}
          <div class="win">${b(i.min, "Minimize")}${b(i.restore, "Restore")}${b(i.close, "Close")}</div>
        </div>
      </div>
      <nav class="tabs">
        ${["Place Views", "Annotate", "Sketch", "Tools", "Manage", "View", "Environments", "Get Started", "Autodesk A360"].map(
          (t) => html`<button class=${t === "Annotate" ? "on" : ""}>${t}</button>`)}
        <button class="pill" aria-label="Ribbon display">${ic(12, 7, svg`<rect width="12" height="7" rx="2" fill="#eee"/><path d="M4 5l2-3 2 3z" fill="#444"/>`)}${caret}</button>
      </nav>
    </header>`;
  }

  private ribbon() {
    const i = icons;
    return html`<section class="ribbon">
      <ribbon-panel class="dim" label="Dimension">
        ${this.big(i.dimension, ["Dimension"], "w52")}
        <div class="col c1">${this.row(i.baseline, "Baseline", true)}${this.row(i.ordinate, "Ordinate", true)}${this.row(i.chain, "Chain", true)}</div>
        <div class="col c2">${this.row(i.arrange, "Arrange")}${this.row(i.retrieve, "Retrieve")}</div>
      </ribbon-panel>
      <ribbon-panel class="feat" label="Feature Notes">
        ${this.big(i.hole, ["Hole and", "Thread"], "w46")}
        <div class="col c3">${this.row(i.chamfer, "Chamfer")}</div>
      </ribbon-panel>
      <ribbon-panel class="txt" label="Text">
        ${this.big(i.bigA, ["Text"])}${this.big(i.leader, ["Leader", "Text"])}
      </ribbon-panel>
      <ribbon-panel class="sym" label="Symbols">
        <button class="big w84"><span class="pic">${i.insert}</span><span>Insert</span><span class="last">Sketch Symbol${caret}</span></button>
        <div class="gallery">
          ${this.big(i.surface, ["Surface"], "w46")}${this.big(i.block, ["Import AutoCAD Block"], "wide")}
          <div class="roll">
            <button aria-label="Scroll up">${ic(7, 4, svg`<path d="M0 4h7L3.500 0z" fill="#333"/>`)}</button>
            <button aria-label="Scroll down">${ic(7, 4, svg`<path d="M0 0h7L3.500 4z" fill="#333"/>`)}</button>
            <button aria-label="Show all">${ic(6, 6, svg`<path d="M0 .5h6M0 2h6" stroke="#333" stroke-width=".8"/><path d="M0 3h6L3 6z" fill="#333"/>`)}</button>
          </div>
        </div>
        <div class="minis">
          <button aria-label="Centerline">${i.cl1}</button><button aria-label="Centerline bisector">${i.cl2}</button>
          <button aria-label="Center mark">${i.cl3}</button><button aria-label="Centered pattern">${i.cl4}</button>
        </div>
      </ribbon-panel>
      <ribbon-panel class="sk" label="Sketch">${this.big(i.sketch, ["Start", "Sketch"])}</ribbon-panel>
      <ribbon-panel class="tab" label="Table">
        <div class="col c3">${this.row(i.holeTable, "Hole", true)}${this.row(i.revTable, "Revision", true)}${this.row(i.genTable, "General")}</div>
      </ribbon-panel>
      <ribbon-panel class="fmt" label="Format">
        ${this.big(i.layers, ["Edit", "Layers"])}
        <div class="picks">
          ${["Layer", "Style"].map((n) => html`<label class="pick"><select aria-label=${n}><option>${n}</option></select>${caret}</label>`)}
        </div>
      </ribbon-panel>
    </section>`;
  }

  private expander(n: Node, last: boolean) {
    if (n.level === 0) return nothing;
    return html`<svg class="exp l${n.level}" viewBox="0 0 14 15" fill="none" stroke="#888" aria-hidden="true">
      <path d=${last ? "M4.500 0v7.500h9" : "M4.500 0v15M5 7.500h9"} />
      ${n.sign ? svg`<path d="M1.500 4.500h6v6h-6z" fill="#fff"/><path d=${n.sign === "+" ? "M3 7.500h3M4.500 6v3" : "M3 7.500h3"} stroke="#000"/>` : nothing}
    </svg>`;
  }

  private sidebar() {
    return html`<aside class="side">
      <div class="grip"><i></i><button aria-label="Close panel">${ic(7, 7, svg`<path d="M1 1l5 5M6 1 1 6" stroke="#000" stroke-width="1.400"/>`)}</button></div>
      <div class="panelhead">
        <button>Model${ic(11, 5, svg`<path d="M4 0h7L7.500 4z" fill="#fff"/>`)}</button>
        <button aria-label="Panel help">${ic(12, 14, svg`<path d="M1 1h10v10H8l-1 2-1-2H1z" fill="#ffffd6" stroke="#222"/><path d="M4 4.500C4 2.300 8 2.300 8 4.500 8 6 6 6 6 7.500M6 8.500V10" stroke="#222" stroke-width="1.300"/>`)}</button>
      </div>
      <ul class="tree">${tree.map((n, k) => html`<li>${this.expander(n, k === tree.length - 1 || k === 2)}${n.icon}<span>${n.name}</span></li>`)}</ul>
    </aside>`;
  }

  private sheet() {
    return html`<svg class="sheet" viewBox="225 178 853 555" role="img" aria-label="Drawing sheet">
      <path class="thick" d="M1073 202.500H237V709H1072.500V202" />
      <path class="thick" d=${ticksX.map((x) => `M${x} 198.500v4M${x} 709v4`).join("") + ticksY.map((y) => `M233 ${y}h4M1072.500 ${y}h4`).join("")} />
      <path class="thin" d=${midX.map((x) => `M${x} 198.500v3M${x} 710v2`).join("")} />
      <path d="M651 196.500h8l-4 6zM651 715.500h8l-4-6zM231 451.500v8l6-4zM1078 451.500v8l-6-4z" fill="#000" stroke="#000" />
      <path class="thick" d="M655 191.500v11M655 709v10M227 455.500h10" />
      <g class="tiny">
        <text x="233" y="248">D</text><text x="233" y="388">C</text><text x="233" y="526">B</text><text x="233" y="666">A</text>
        <text x="1074" y="248">D</text><text x="1074" y="388">C</text><text x="1074" y="526">B</text><text x="1074" y="666">A</text>
      </g>
      ${sideView}${frontView}${topView}${isoView}${titleBlock}
    </svg>`;
  }

  private navBar() {
    const lens = (inner: unknown) => ic(18, 17, svg`<path d="M11 11l4 4" stroke="#888" stroke-width="3"/><circle cx="7.500" cy="7.500" r="5.500" fill="#e9eae0" stroke="#888" stroke-width="1.300"/>${inner}`);
    return html`<div class="nav">
      <button class="x" aria-label="Close bar">${ic(7, 7, svg`<circle cx="3.500" cy="3.500" r="3" stroke="#555"/><path d="M2 2l3 3M5 2 2 5" stroke="#555"/>`)}</button>
      <button aria-label="Wheel">${ic(20, 23, svg`<path d="M2 9C2 0 17 0 17 9v7H9c-4 0-7-3-7-7z" fill="#bfc4cc" stroke="#70777f"/><circle cx="9.500" cy="9" r="5" fill="#eceef0" stroke="#777"/><circle cx="9.500" cy="9" r="2.500" stroke="#777"/><path d="M10 15.500h3v2h-3v2h3M15 15v5c4 0 4-5 0-5" stroke="#4b7db5" stroke-width="1.300"/>`)}</button>
      <hr />
      <button aria-label="Pan">${ic(16, 16, svg`<path d="M5 14 1.500 9l1-1L5 10 3 4l1.300-.5L6.500 8 6 2h1.500L9 8l1-5.500 1.300.3L11 9l2-3.500 1.300.5L12.500 12v3H5.500z" fill="#f3f3ee" stroke="#777"/>`)}</button>
      <button aria-label="Zoom">${ic(18, 18, svg`<path d="M8 10l5 5" stroke="#888" stroke-width="3"/><circle cx="6" cy="7.500" r="4.500" fill="#e9eae0" stroke="#888" stroke-width="1.300"/><path d="M12 4.500h5M14.500 2v5M12 9h5" stroke="#777"/>`)}</button>
      <button aria-label="Zoom all">${lens(svg`<path d="M5.500 5h3l1.500 1.500V10H5.500z" fill="#fff" stroke="#777"/>`)}</button>
      <button aria-label="Zoom window">${lens(svg`<path d="M5 5.500h5v4H5z" fill="#fff" stroke="#777"/>`)}</button>
      <button class="o" aria-label="Bar options">${ic(7, 7, svg`<circle cx="3.500" cy="3.500" r="3" stroke="#777"/><path d="M2 3.500h3" stroke="#777"/>`)}</button>
    </div>`;
  }

  private workspace() {
    const i = icons;
    const w = (icon: unknown, name: string) => html`<button class="wbtn" aria-label=${name}>${icon}</button>`;
    return html`<section class="work">
      <div class="canvas">
        ${this.sheet()}
        <div class="mdi">
          <button aria-label="Minimize sheet">${ic(9, 10, svg`<path d="M0 8h9" stroke="#fff" stroke-width="2"/>`)}</button>
          <button aria-label="Restore sheet">${ic(9, 10, svg`<path d="M3 3V1.500h5.500V7H7M1 3.500h5.500V9H1z" stroke="#fff" stroke-width="1.400"/>`)}</button>
          <button aria-label="Close sheet">${ic(9, 10, svg`<path d="M1 1.500l7 7M8 1.500l-7 7" stroke="#fff" stroke-width="2"/>`)}</button>
        </div>
        ${this.navBar()}
      </div>
      <div class="docs">
        ${w(i.wcascade, "Cascade")}${w(i.wgrid, "Arrange")}${w(i.whoriz, "Tile horizontally")}${w(i.wvert, "Tile vertically")}${w(i.wup, "Open windows")}
        <button class="doc">My Home</button><button class="doc">Cabezal CNC.ipt</button>
        <button class="doc on">Cabezal CNC<sup>⊠</sup></button>
      </div>
    </section>`;
  }

  private taskbar() {
    return html`<footer class="task">
      <button class="start" aria-label="Start">${ic(30, 30, svg`<circle cx="15" cy="15" r="14" fill="#1d4f7c" stroke="#a8c8dd"/><ellipse cx="15" cy="22" rx="10" ry="6" fill="#2ab5e8" opacity=".8"/><ellipse cx="15" cy="8" rx="11" ry="6" fill="#7fa3bd" opacity=".8"/><path d="M8 9c2-2 4-1 6.500 0l-1.300 6c-2-1-4.500-1.500-6.500-.5z" fill="#ee5a24"/><path d="M15.500 9.500c2 1 4.500 1.500 7.500 0l-1.500 6c-2 1-4.500 1-7 0z" fill="#8cc63f"/><path d="M6.500 15.500c2-1 4-.5 6.500.5l-1.300 6c-2-1-4.500-1.500-6.500-.5z" fill="#34a3e0"/><path d="M14 16.500c2.500 1 4.500 1 7.200 0l-1.400 6c-2 1-4.500 1-7 0z" fill="#ffc71c"/>`)}</button>
      <button class="pin" aria-label="Calculator">${ic(18, 26, svg`<path d="M.5.5h17v25H.5z" fill="#c6dcef" stroke="#7f9fbd"/><path d="M2 2h14v8H2z" fill="#eef6fc" stroke="#9bb8d0"/><path d="M12 4v4h2V4zM12 6h2" stroke="#456"/><path d="M2.500 13.500h13M2.500 17h13M2.500 20.500h9M2.500 23.500h9" stroke="#5f8db6" stroke-width="2" stroke-dasharray="2 1"/><path d="M13 19.500h3v5h-3z" fill="#f0a030"/>`)}</button>
      <button class="run" aria-label="Browser">${ic(26, 26, svg`<circle cx="13" cy="13" r="12.500" fill="#fbc116"/><path d="M2.200 6.750A12.500 12.500 0 0 0 12.500 25.500L18 16 13 13 8 15z" fill="#1a9b57"/><path d="M13 .5A12.500 12.500 0 0 0 2.200 6.750L8 16l5-9h10.800A12.500 12.500 0 0 0 13 .5z" fill="#dc4437"/><circle cx="13" cy="13" r="6" fill="#fff"/><circle cx="13" cy="13" r="4.700" fill="#4688f1"/>`)}</button>
      <button class="run" aria-label="File explorer">${ic(28, 27, svg`<path d="M1 3h10l2 3h13v18H1z" fill="#e9c96b" stroke="#c9a545"/><path d="M4 2h8v4H4zM14 4h10v4H14z" fill="#fff"/><path d="M4 2h3v1.500H4z" fill="#3c9a4a"/><path d="M8 2h3v1.500H8z" fill="#d33"/><path d="M1 8h26v15H1z" fill="#fbe79d" stroke="#dcbf66"/><path d="M5 26v-8c0-3 3-4 9-4s9 1 9 4v8h-4v-6H9v6z" fill="#9fd3ee" stroke="#4a9cc4"/>`)}</button>
      <button class="run" aria-label="Inventor"><svg width="28" height="27" viewBox="0 0 28 27" aria-hidden="true"><rect width="28" height="27" fill="#f4b98a" /><path d="M0 27 28 4v23z" fill="#fae0cb" /><path d="M8 2h13v6h-3v8h3v5H8v-5h3V8H8z" fill="#b2561c" /><path d="M14 8h4v8h-4z" fill="#7f3608" /><path d="M18 20h10v7H18z" fill="#fff" /><text x="20" y="26" font-size="6" fill="#222">LT</text></svg></button>
      <div class="tray">
        <span class="lang">ES</span>
        <button aria-label="Hidden icons">${ic(8, 5, svg`<path d="M1 4.500h6L4 1z" fill="#fff"/>`)}</button>
        <button aria-label="Antivirus">${ic(22, 13, svg`<path d="M9 2l3-1 3 1 5-1-1 5 2 3-3 3h-4l-3 1-3-2 1-3-2-3z" fill="#f57c0a"/><circle cx="14" cy="6.500" r="2" stroke="#fff" stroke-width="1.200"/><path d="M16.500 4.500v4" stroke="#fff"/>`)}</button>
        <button aria-label="Alerts">${ic(15, 14, svg`<path d="M2 1v12" stroke="#fff" stroke-width="1.500"/><path d="M3 1.500h7v6H3z" fill="#fff" stroke="#555" stroke-width=".6"/><circle cx="9.500" cy="9.500" r="4" fill="#d6242c"/><path d="M8 8l3 3M11 8l-3 3" stroke="#fff" stroke-width="1.200"/>`)}</button>
        <button aria-label="Network">${ic(15, 14, svg`<path d="M4.500 4.500h9v6h-9z" fill="#6b7d95" stroke="#fff" stroke-width="1.200"/><path d="M6 12.500h6M2.500 1v8M1 1.500h4v3H1z" stroke="#fff"/>`)}</button>
        <button aria-label="Volume">${ic(14, 12, svg`<path d="M1 4h2l4-3v10L3 8H1z" fill="#fff"/><path d="M9 4q1.500 2 0 4M11 2.500q2.500 3.500 0 7" stroke="#fff"/>`)}</button>
        <time class="clock">0:21<br />19/03/2018</time>
        <button class="peek" aria-label="Show desktop"></button>
      </div>
    </footer>`;
  }

  render() {
    return html`${this.header()}${this.ribbon()}
      <main class="main">${this.sidebar()}${this.workspace()}</main>
      <div class="status"><span class="msg">Ready</span><span class="n">1</span><span class="n">2</span><span class="lamp"></span><span class="dark"></span></div>
      ${this.taskbar()}`;
  }
}
